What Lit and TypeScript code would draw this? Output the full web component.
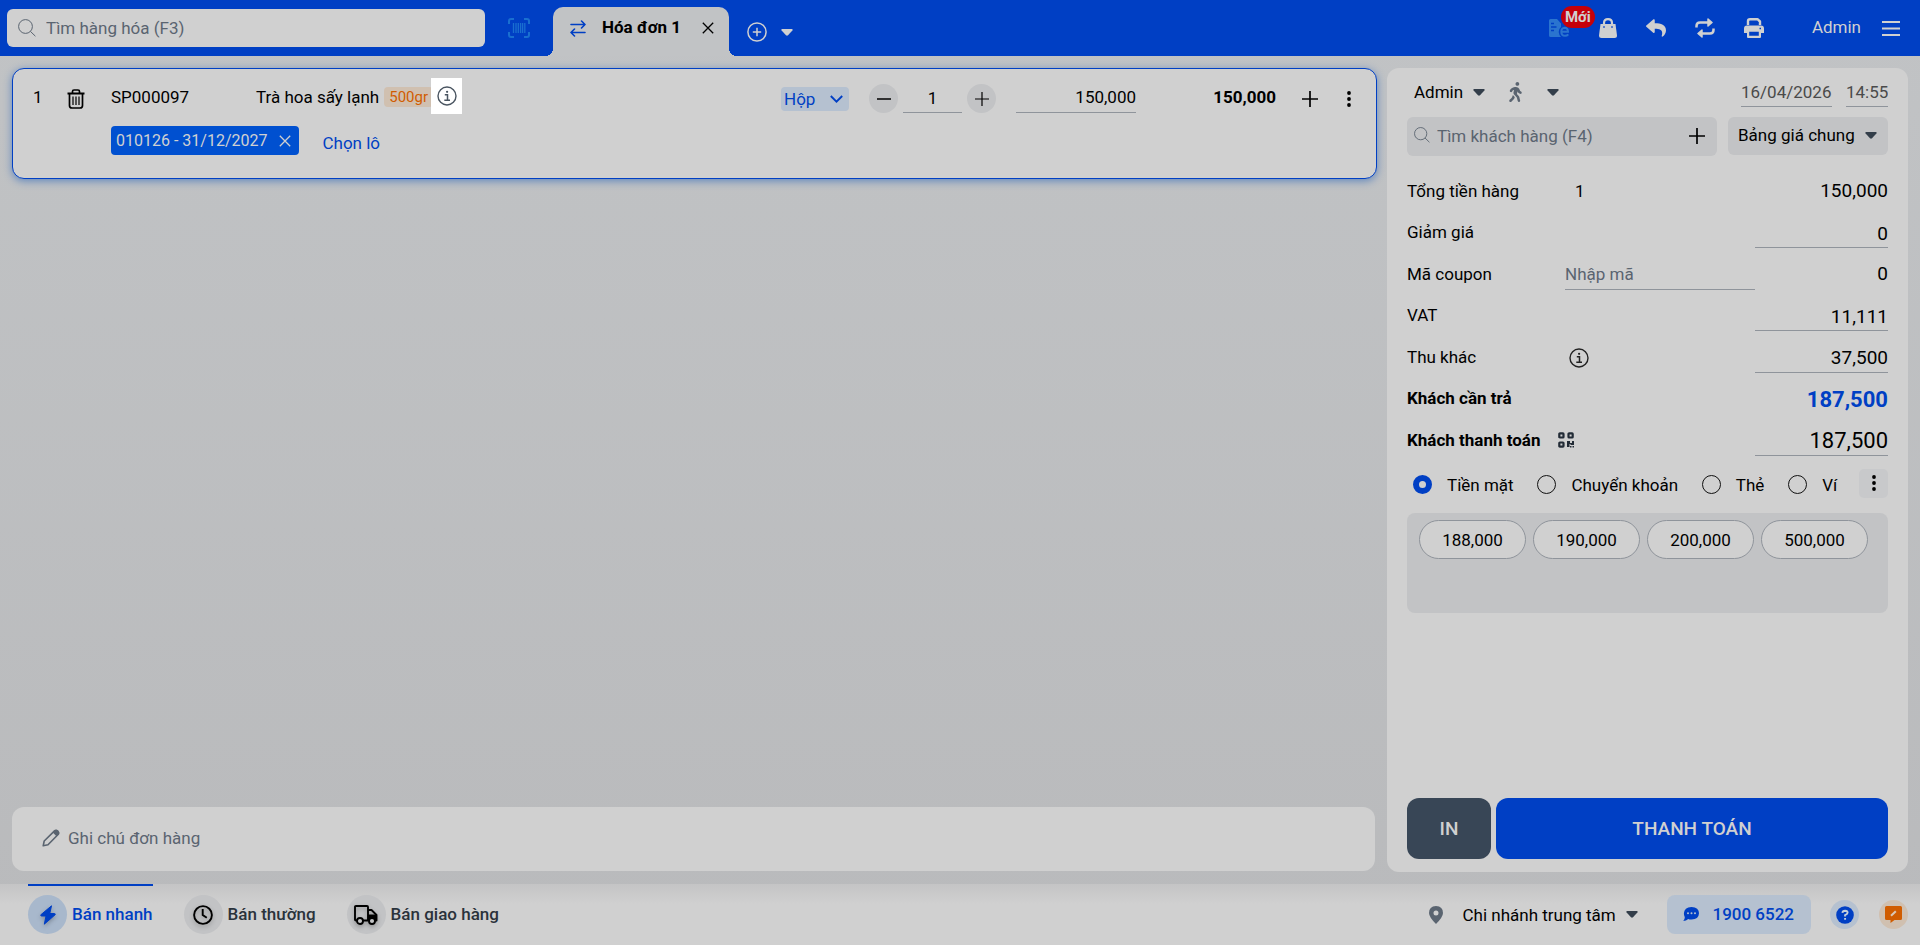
import { LitElement, html, css, svg } from "lit";
import { customElement, state } from "lit/decorators.js";

const icon = (w: number, h: number, body: unknown, viewBox = `0 0 ${w} ${h}`) =>
  html`<svg width=${w} height=${h} viewBox=${viewBox} fill="none" stroke="currentColor" aria-hidden="true">${body}</svg>`;

const icons = {
  search: () => icon(18, 18, svg`<circle cx="7.5" cy="7.5" r="6.9"/><path d="M12.4 12.4L17.4 17.2"/>`),
  searchSmall: () => icon(16, 16, svg`<circle cx="7.5" cy="7.5" r="6.9"/><path d="M12.4 12.4L17.4 17.2"/>`, "0 0 18 18"),
  barcode: () => icon(22, 20, svg`<path stroke-width="2" d="M1 6V3Q1 1 3 1H6M16 1H19Q21 1 21 3V6M21 14V17Q21 19 19 19H16M6 19H3Q1 19 1 17V14"/><path stroke-width="1.3" d="M5.5 5V15M8 5V15M10.3 5V15M12.6 5V15M14.6 5V15M16.8 5V15"/>`),
  swap: () => icon(16, 17, svg`<path stroke-width="1.6" stroke-linecap="round" stroke-linejoin="round" d="M1 4.5H15M11.5 1L15 4.5L11.5 8M15 12.5H1M4.5 9L1 12.5L4.5 16"/>`),
  close: () => icon(12, 12, svg`<path stroke-width="1.3" d="M.8 .8L11.2 11.2M11.2 .8L.8 11.2"/>`),
  plusCircle: () => icon(20, 20, svg`<circle cx="10" cy="10" r="9.1" stroke-width="1.5"/><path stroke-width="1.5" d="M10 5.8V14.2M5.8 10H14.2"/>`),
  caret: () => icon(12, 7, svg`<path fill="currentColor" stroke="none" d="M1.2 0H10.8Q12.2 .3 11.4 1.4L7 6.3Q6 7.2 5 6.3L.6 1.4Q-.2 .3 1.2 0Z"/>`),
  invoice: () => icon(21, 18, svg`<path fill="currentColor" stroke="none" d="M1.5 0H8L12 4.5V8Q9.500 10 9.700 13Q10 16 12 18H1.500Q0 18 0 16.500V1.500Q0 0 1.500 0Z"/><path stroke="#003fc4" stroke-width="1.500" d="M2 4.500H5M2 8H7.500M2 11.500H5"/><path stroke-width="2" d="M12.500 12.700H19Q18.800 8.700 15.700 8.700Q12.300 8.900 12.300 12.700Q12.300 16.800 16 16.800Q18 16.800 19.300 15.300"/>`),
  bag: () => icon(18, 20, svg`<path stroke-width="2.200" d="M5 8V5Q5 1.200 9 1.200Q13 1.200 13 5V8"/><path fill="currentColor" stroke="none" d="M1.500 6H16.500L18 17.500Q18 20 15.500 20H2.500Q0 20 0 17.500Z"/><path stroke="#003fc4" stroke-width="1.500" d="M5 8.200V9.800M13 8.200V9.800"/>`),
  reply: () => icon(20, 20, svg`<path fill="currentColor" stroke="none" d="M8.309 189.836L184.313 37.851C199.719 24.546 224 35.347 224 56.015v80.053c160.629 1.839 288 34.032 288 186.258 0 61.441-39.581 122.309-83.333 154.132-13.653 9.931-33.111-2.533-28.077-18.631 45.344-145.012-21.507-183.510-176.590-185.742V360c0 20.700-24.300 31.453-39.687 18.164l-176.004-152c-11.071-9.562-11.086-26.753 0-36.328z"/>`, "0 0 512 512"),
  sync: () => icon(20, 20, svg`<path stroke-width="2.500" d="M1.500 9.500V8Q1.500 4.500 5 4.500H14M18.500 10.500V12Q18.500 15.500 15 15.500H6"/><path fill="currentColor" stroke-width="1.500" stroke-linejoin="round" d="M13 1L17 4.500L13 8ZM7 12L3 15.500L7 19Z"/>`),
  print: () => icon(20, 20, svg`<path stroke-width="2.400" stroke-linejoin="round" d="M4 7V3Q4 1.200 6 1.200H13.500L16 3.500V7"/><path fill="currentColor" stroke="none" d="M3 7.500H17Q20 7.500 20 10.500V15H17V19Q17 20 16 20H4Q3 20 3 19V15H0V10.500Q0 7.500 3 7.500Z"/><path fill="#003fc4" stroke="none" d="M5.200 13.700H14.800V17.700H5.200ZM15.500 9.800H17V11.300H15.500Z"/>`),
  menu: () => icon(18, 15, svg`<path stroke-width="2" d="M0 1H18M0 7.500H18M0 14H18"/>`),
  trash: () => icon(18, 20, svg`<path stroke-width="2" d="M0.500 4.500H17.500"/><path stroke-width="1.700" d="M5.500 4V2.500Q5.500 1 7 1H11Q12.500 1 12.500 2.500V4M2.500 4.500V16.500Q2.500 19 5 19H13Q15.500 19 15.500 16.500V4.500"/><path stroke-width="1.200" d="M6 7.500V16M9 7.500V16M12 7.500V16"/>`),
  info: () => icon(20, 20, svg`<circle cx="10" cy="10" r="9" stroke-width="1.400"/><path stroke-width="1.500" d="M7.800 8.800H10.500V14M7.300 14.200H13"/><circle cx="10.100" cy="5.800" r="1.100" fill="currentColor" stroke="none"/>`),
  chevron: () => icon(13, 8, svg`<path stroke-width="1.900" d="M.8 1L6.500 6.600L12.200 1"/>`),
  minus: () => icon(14, 14, svg`<path stroke-width="1.500" d="M0 7H14"/>`),
  plus: () => icon(16, 16, svg`<path stroke-width="1.700" d="M0 8H16M8 0V16"/>`),
  plusThin: () => icon(14, 14, svg`<path stroke-width="1.200" d="M0 7H14M7 0V14"/>`),
  kebab: () => icon(4, 16, svg`<g fill="currentColor" stroke="none"><circle cx="2" cy="2" r="1.900"/><circle cx="2" cy="8" r="1.900"/><circle cx="2" cy="14" r="1.900"/></g>`),
  walk: () => icon(13, 20, svg`<path fill="currentColor" stroke="none" d="M208 96c26.500 0 48-21.500 48-48S234.500 0 208 0s-48 21.500-48 48 21.500 48 48 48zm94.500 149.100l-23.300-11.800-9.700-29.400c-14.700-44.600-55.700-75.800-102.200-75.900-36-.1-55.900 10.100-93.300 25.200-21.600 8.700-39.300 25.200-49.700 46.200L17.600 213c-7.800 15.800-1.500 35 14.200 42.900 15.600 7.900 34.600 1.500 42.500-14.300L81 228c3.500-7 9.300-12.500 16.500-15.400l26.800-10.800-15.200 60.700c-5.200 20.800.4 42.900 14.900 58.800l59.900 65.400c7.200 7.900 12.300 17.400 14.900 27.700l18.300 73.300c4.300 17.100 21.700 27.600 38.800 23.300 17.100-4.300 27.600-21.700 23.300-38.800l-22.200-89c-2.600-10.300-7.700-19.900-14.900-27.700l-45.500-49.700 17.200-68.700 5.500 16.500c5.300 16.100 16.700 29.400 31.700 37l23.300 11.800c15.600 7.900 34.600 1.500 42.500-14.300 7.700-15.700 1.400-35.100-14.300-43zM73.600 385.800c-3.200 8.100-8 15.400-14.200 21.500l-50 50.100c-12.500 12.500-12.500 32.800 0 45.300s32.700 12.500 45.200 0l59.400-59.400c6.100-6.100 10.900-13.400 14.200-21.500l13.500-33.800c-55.300-60.300-38.700-41.800-47.400-53.700l-20.700 51.500z"/>`, "0 0 320 512"),
  qr: () => icon(16, 16, svg`<g stroke-width="2.200"><rect x="1.300" y="1.300" width="4.200" height="4.200" rx=".6"/><rect x="10.500" y="1.300" width="4.200" height="4.200" rx=".6"/><rect x="1.300" y="10.500" width="4.200" height="4.200" rx=".6"/></g><path fill="currentColor" stroke="none" d="M9 9H12V11H14V9H16V13H12.500V12H11.500V15H9ZM12 14H13.500V15.500H12ZM14.500 14H16V15.500H14.500Z"/>`),
  pencil: () => icon(18, 18, svg`<path stroke-width="1.600" stroke-linejoin="round" d="M1.200 16.800L2.200 12L12.500 1.900Q14 .5 15.800 2.200Q17.500 4 16.100 5.500L6 15.800Z"/><path fill="currentColor" stroke="none" d="M10.800 3.500L12.500 1.500Q14.200 .1 16.200 1.800Q18 3.800 16.500 5.500L14.500 7.200Z"/>`),
  bolt: () => icon(16, 20, svg`<path fill="currentColor" stroke-linejoin="round" d="M11.500 .8L.8 9.800Q.4 10.800 1.500 11H6L4.300 19.200L15.200 9.700Q15.600 8.700 14.500 8.500H9.800Z"/>`),
  clock: () => icon(20, 20, svg`<circle cx="10" cy="10" r="8.900" stroke-width="1.900"/><path stroke-width="1.900" d="M9.700 4V10L13.800 12.800"/>`),
  truck: () => icon(24, 20, svg`<path stroke-width="1.900" stroke-linejoin="round" d="M3 15.500H1.800Q1 15.500 1 14.500V2Q1 1 2 1H13Q14 1 14 2V15.500H9M14 5H17.500L22.500 10V15.500H21"/><path fill="currentColor" stroke="none" d="M14 9.500H22.500V15.500H14Z"/><g fill="#c3c4c6" stroke-width="1.900"><circle cx="6" cy="16" r="3"/><circle cx="18" cy="16" r="3"/></g>`),
  pin: () => icon(14, 18, svg`<path fill="currentColor" fill-rule="evenodd" stroke="none" d="M7 0Q14 .3 14 7Q14 11 7 18Q0 11 0 7Q0 .3 7 0ZM7 4.500A2.500 2.500 0 1 0 7 9.500A2.500 2.500 0 1 0 7 4.500Z"/>`),
  chat: () => icon(16, 14, svg`<path fill="currentColor" stroke="none" d="M8.500 0Q16 .3 16 6.300Q15.700 12.500 8.500 12.600Q6.500 12.600 5.200 12Q3.200 13.900 .3 14Q1.900 12 1.800 10.300Q.8 8.500 .9 6.300Q1.200 .3 8.500 0Z"/><g fill="#b5c1d0" stroke="none"><circle cx="5" cy="6.300" r="1"/><circle cx="8.500" cy="6.300" r="1"/><circle cx="12" cy="6.300" r="1"/></g>`),
  help: () => icon(18, 18, svg`<circle cx="9" cy="9" r="8.800" fill="currentColor" stroke="none"/><path stroke="#c6d0dc" stroke-width="1.900" d="M6.400 6.900Q6.600 4.700 9.100 4.700Q11.600 4.800 11.600 6.800Q11.500 8.200 9.100 9.200V10.600M9.100 11.900V13.700"/>`),
  feedback: () => icon(17, 17, svg`<path fill="currentColor" stroke="none" d="M1.500 0H15.500Q17 0 17 1.500V12.500Q17 14 15.500 14H9.500L5.500 17V14H1.500Q0 14 0 12.500V1.500Q0 0 1.500 0Z"/><path stroke="#d9c9b8" stroke-width="2" d="M6 9.800L10.800 5.200"/>`),
};

@customElement("app-root")
export class AppRoot extends LitElement {
  @state() private method = "Tiền mặt";

  private methods = ["Tiền mặt", "Chuyển khoản", "Thẻ", "Ví"];
  private amounts = ["188,000", "190,000", "200,000", "500,000"];

  static styles = css`
    :host {
      --blue: #003fc4;
      --surface: #d0d0d0;
      --soft: #c2c3c5;
      --line: #8f949b;
      --muted: #5a6470;
      display: flex;
      flex-direction: column;
      min-height: 100vh;
      font: 17px/26px Roboto, sans-serif;
      color: #000;
      background: linear-gradient(#c1c3c5, #b9babc);
    }
    * { box-sizing: border-box; }
    svg { display: block; flex: none; }
    button, input, select {
      font: inherit;
      color: inherit;
      background: none;
      border: 0;
      border-radius: 0;
      padding: 0;
      margin: 0;
      outline: 0;
      min-width: 0;
    }
    button { display: flex; align-items: center; justify-content: center; cursor: pointer; }
    select { appearance: none; cursor: pointer; }
    input::placeholder { color: var(--muted); opacity: 1; }
    a { color: var(--blue); text-decoration: none; }

    .header { display: flex; height: 56px; background: var(--blue); color: var(--surface); }
    .find {
      display: flex; align-items: center; gap: 10px;
      width: 478px; height: 38px; margin: 9px 0 0 7px; padding: 0 11px;
      border-radius: 6px; background: var(--surface); color: var(--muted);
    }
    .find input { flex: 1; }
    .scan { width: 22px; margin: 0 23px; color: #1a6fd0; }
    .tab {
      position: relative; display: flex; align-items: center;
      width: 176px; height: 49px; margin-top: 7px; padding: 0 15px 17px 17px;
      border-radius: 10px 10px 0 0; background: #c1c3c5; color: #000; font-weight: 700;
    }
    .tab::before, .tab::after { content: ""; position: absolute; bottom: 0; width: 8px; height: 8px; }
    .tab::before { right: 100%; background: radial-gradient(circle at 0 0, transparent 8px, #c1c3c5 8px); }
    .tab::after { left: 100%; background: radial-gradient(circle at 100% 0, transparent 8px, #c1c3c5 8px); }
    .tab svg { margin-top: 10px; }
    .tab > svg { color: var(--blue); }
    .tab span { flex: 1; padding: 7px 0 0 16px; }
    .tab-tools { display: flex; align-items: center; gap: 14px; margin: 8px auto 0 18px; }
    .head-tools { display: flex; align-items: center; gap: 29px; }
    .head-tools .news { position: relative; color: #2a74cf; }
    .badge {
      position: absolute; left: 12px; top: -13px; padding: 0 4px;
      border-radius: 11px; background: #c50009; color: var(--surface);
      font-size: 15px; line-height: 22px; font-weight: 700;
    }
    .user { margin: 0 21px 0 48px; line-height: 54px; }
    .burger { margin-right: 20px; }

    .main { flex: 1; display: grid; grid-template-columns: minmax(0, 1fr) 521px; gap: 10px; padding: 12px; }
    .cart { display: flex; flex-direction: column; justify-content: space-between; }
    .item {
      padding: 15px 0 23px 20px; border: 1px solid var(--blue); border-radius: 12px;
      background: var(--surface); box-shadow: 0 2px 8px #5f86bd;
    }
    .item-row {
      display: grid; align-items: start;
      grid-template-columns: 34px 44px 145px minmax(0, 1fr) 88px 147px 120px 140px 100px;
    }
    .del { width: 18px; padding-top: 5px; }
    .name { display: flex; align-items: center; }
    .size {
      margin-left: 5px; padding: 0 5px; border-radius: 4px; background: #d0c0b0;
      color: #d05c00; font-size: 15px; line-height: 20px;
    }
    .focus {
      width: 31px; height: 36px; margin: -6px 0 -4px -2px;
      background: #fff; color: #4a5561;
    }
    .unit {
      display: flex; align-items: center; width: 68px; height: 24px; margin-top: 3px; padding: 0 6px 0 3px;
      border-radius: 4px; background: #b5c1d0; color: var(--blue);
    }
    .unit select { flex: 1; }
    .qty { display: flex; gap: 5px; }
    .round { width: 29px; height: 29px; border-radius: 50%; background: var(--soft); }
    .line { border-bottom: 1px solid var(--line); }
    .qty input { width: 59px; height: 29px; text-align: center; }
    .price { width: 120px; height: 29px; padding-bottom: 3px; text-align: right; }
    .total { font-weight: 700; text-align: right; }
    .row-tools { display: flex; gap: 9px; padding-left: 19px; }
    .row-tools button { width: 30px; height: 30px; }
    .lots { display: flex; align-items: center; gap: 23px; margin-top: 12px; padding-left: 78px; }
    .chip {
      display: flex; align-items: center; gap: 12px; height: 29px; padding: 0 8px 0 5px;
      border-radius: 4px; background: #0050d0; color: var(--surface); font-size: 16px;
    }
    .lots a { padding-top: 4px; margin-bottom: -1px; }
    .note {
      display: flex; align-items: center; gap: 8px; height: 64px; margin: 0 2px 1px 0; padding: 0 30px 2px;
      border-radius: 12px; background: var(--surface); color: var(--muted);
    }
    .note input { flex: 1; }

    .panel {
      display: flex; flex-direction: column; padding: 0 20px 13px;
      border-radius: 12px; background: var(--surface);
    }
    .meta { display: flex; align-items: center; height: 49px; padding: 0 0 1px 7px; color: #333e4a; }
    .meta select { color: #000; margin-right: 9px; }
    .meta .walk { display: flex; align-items: center; gap: 25px; margin: 0 auto 0 24px; }
    .meta .walk svg:first-child { color: #5a6470; }
    .meta input { height: 30px; color: #4a4a4a; }
    .date { width: 91px; margin-right: 14px; }
    .time { width: 42px; }
    .buyer { display: flex; gap: 11px; margin-bottom: 22px; }
    .customer {
      flex: 1; display: flex; align-items: center; gap: 7px; height: 39px; padding: 0 12px 2px 7px;
      border-radius: 6px; background: var(--soft); color: var(--muted);
    }
    .customer input { flex: 1; }
    .customer > svg { margin-bottom: 2px; }
    .customer button { color: #000; }
    .pricebook {
      display: flex; align-items: center; justify-content: space-between; width: 160px; height: 38px;
      padding: 0 11px 2px 10px; border-radius: 6px; background: var(--soft); color: #333e4a;
    }
    .pricebook select { color: #000; }
    .sums { display: grid; grid-auto-rows: 1fr; height: 290px; }
    .sum { display: grid; grid-template-columns: 158px minmax(0, 1fr) 133px; align-items: start; }
    .sum > :last-child { text-align: right; font-size: 19px; width: 133px; }
    .sum .count { padding-left: 10px; }
    .sum .count-info { padding: 4px 0 0 4px; color: #222; }
    .sum .coupon { height: 29px; padding-bottom: 1px; }
    .sum .amount { height: 29px; }
    .sum.due { font-weight: 700; }
    .sum > .big { font-size: 22px; }
    .sum .due-total { color: var(--blue); line-height: 30px; }
    .sum .pay-label { display: flex; align-items: center; gap: 18px; white-space: nowrap; font-weight: 700; }
    .pay-label svg { color: #222b36; }
    .methods { display: flex; align-items: center; justify-content: space-between; height: 30px; margin-bottom: 15px; padding-left: 6px; }
    .methods label { display: flex; align-items: center; gap: 15px; }
    .methods span { padding-top: 3px; }
    .methods input { appearance: none; width: 19px; height: 19px; margin-top: 2px; border: 1px solid #111; border-radius: 50%; }
    .methods input:checked { border: 6px solid var(--blue); }
    .methods button { width: 29px; height: 29px; margin-left: -2px; border-radius: 5px; background: #c8c9cb; }
    .amounts {
      display: flex; align-items: flex-start; gap: 7px; height: 100px; padding: 7px 12px;
      border-radius: 8px; background: var(--soft);
    }
    .amounts button { width: 107px; height: 39px; border: 1px solid var(--line); border-radius: 20px; background: var(--surface); }
    .actions { display: flex; gap: 5px; margin-top: auto; }
    .actions button { height: 61px; border-radius: 12px; color: var(--surface); font-size: 19px; font-weight: 500; }
    .print { width: 84px; background: #384656; }
    .pay { flex: 1; background: var(--blue); }

    .footer {
      display: flex; align-items: center; height: 61px; padding: 0 12px 0 28px;
      background: linear-gradient(#c4c4c5, var(--surface) 20px);
    }
    .modes { display: flex; gap: 31px; margin-right: auto; height: 100%; }
    .mode {
      display: flex; align-items: center; gap: 5px; padding-bottom: 2px; color: #2a323b; font-weight: 500;
      border-top: 2px solid transparent;
    }
    .mode.on { color: var(--blue); border-color: var(--blue); }
    .mode span { padding-bottom: 2px; }
    .mode i { display: grid; place-items: center; width: 39px; height: 39px; border-radius: 50%; background: var(--soft); color: #000; }
    .mode i svg { filter: drop-shadow(0 2px 2px rgba(0, 0, 0, 0.25)); }
    .mode.on i { background: #a8b8cc; color: var(--blue); }
    .branch { display: flex; align-items: center; color: #333e4a; margin-right: 29px; }
    .branch > svg:first-child { color: #5a6470; margin-right: 19px; }
    .branch select { color: #000; margin-right: 10px; }
    .phone {
      display: flex; align-items: center; gap: 13px; height: 39px; padding: 0 17px 2px 16px; margin-right: 19px;
      border-radius: 8px; background: #b5c1d0; font-weight: 500;
    }
    .dot { width: 29px; height: 29px; border-radius: 50%; background: #b5c1d0; color: var(--blue); }
    .dot.orange { margin-left: 20px; background: #d0c0b0; color: #d05c00; }
  `;

  private field(label: string, value: string, id: string, middle: unknown = html`<span></span>`) {
    return html`<div class="sum">
      <label for=${id}>${label}</label>${middle}
      <input class="amount line" id=${id} .value=${value} />
    </div>`;
  }

  render() {
    return html`
      <header class="header">
        <label class="find">${icons.search()}<input placeholder="Tìm hàng hóa (F3)" aria-label="Tìm hàng hóa" /></label>
        <button class="scan" aria-label="Quét mã vạch">${icons.barcode()}</button>
        <div class="tab">${icons.swap()}<span>Hóa đơn 1</span><button aria-label="Đóng">${icons.close()}</button></div>
        <div class="tab-tools">
          <button aria-label="Thêm hóa đơn">${icons.plusCircle()}</button>
          <button aria-label="Danh sách">${icons.caret()}</button>
        </div>
        <div class="head-tools">
          <button class="news" aria-label="Hóa đơn điện tử">${icons.invoice()}<span class="badge">Mới</span></button>
          <button aria-label="Đặt hàng">${icons.bag()}</button>
          <button aria-label="Trả hàng">${icons.reply()}</button>
          <button aria-label="Đồng bộ">${icons.sync()}</button>
          <button aria-label="In">${icons.print()}</button>
        </div>
        <span class="user">Admin</span>
        <button class="burger" aria-label="Menu">${icons.menu()}</button>
      </header>

      <main class="main">
        <section class="cart">
          <article class="item">
            <div class="item-row">
              <span>1</span>
              <button class="del" aria-label="Xóa">${icons.trash()}</button>
              <span>SP000097</span>
              <div class="name">
                <span>Trà hoa sấy lạnh</span><span class="size">500gr</span>
                <button class="focus" aria-label="Thông tin">${icons.info()}</button>
              </div>
              <div class="unit"><select aria-label="Đơn vị"><option>Hộp</option></select>${icons.chevron()}</div>
              <div class="qty">
                <button class="round" aria-label="Giảm">${icons.minus()}</button>
                <input class="line" aria-label="Số lượng" value="1" />
                <button class="round" aria-label="Tăng">${icons.plusThin()}</button>
              </div>
              <input class="price line" aria-label="Đơn giá" value="150,000" />
              <span class="total">150,000</span>
              <div class="row-tools">
                <button aria-label="Thêm dòng">${icons.plus()}</button>
                <button aria-label="Tùy chọn">${icons.kebab()}</button>
              </div>
            </div>
            <div class="lots">
              <span class="chip">010126 - 31/12/2027 <button aria-label="Bỏ lô">${icons.close()}</button></span>
              <a href="#">Chọn lô</a>
            </div>
          </article>
          <label class="note">${icons.pencil()}<input placeholder="Ghi chú đơn hàng" aria-label="Ghi chú đơn hàng" /></label>
        </section>

        <aside class="panel">
          <div class="meta">
            <select aria-label="Nhân viên"><option>Admin</option></select>${icons.caret()}
            <button class="walk" aria-label="Kênh bán">${icons.walk()}${icons.caret()}</button>
            <input class="date line" aria-label="Ngày" value="16/04/2026" />
            <input class="time line" aria-label="Giờ" value="14:55" />
          </div>
          <div class="buyer">
            <div class="customer">
              ${icons.searchSmall()}<input placeholder="Tìm khách hàng (F4)" aria-label="Tìm khách hàng" />
              <button aria-label="Thêm khách hàng">${icons.plus()}</button>
            </div>
            <div class="pricebook"><select aria-label="Bảng giá"><option>Bảng giá chung</option></select>${icons.caret()}</div>
          </div>
          <div class="sums">
            <div class="sum"><span>Tổng tiền hàng</span><span class="count">1</span><span>150,000</span></div>
            ${this.field("Giảm giá", "0", "discount")}
            <div class="sum">
              <label for="coupon">Mã coupon</label>
              <input class="coupon line" id="coupon" placeholder="Nhập mã" />
              <span>0</span>
            </div>
            ${this.field("VAT", "11,111", "vat")}
            ${this.field("Thu khác", "37,500", "other", html`<span class="count-info">${icons.info()}</span>`)}
            <div class="sum due"><span>Khách cần trả</span><span></span><span class="big due-total">187,500</span></div>
            <div class="sum">
              <label class="pay-label" for="paid">Khách thanh toán ${icons.qr()}</label><span></span>
              <input class="amount line big" id="paid" value="187,500" />
            </div>
          </div>
          <div class="methods">
            ${this.methods.map(
              (m) => html`<label>
                <input type="radio" name="method" .checked=${m === this.method} @change=${() => (this.method = m)} />
                <span>${m}</span>
              </label>`
            )}
            <button aria-label="Khác">${icons.kebab()}</button>
          </div>
          <div class="amounts">${this.amounts.map((a) => html`<button>${a}</button>`)}</div>
          <div class="actions"><button class="print">IN</button><button class="pay">THANH TOÁN</button></div>
        </aside>
      </main>

      <footer class="footer">
        <nav class="modes">
          <a class="mode on" href="#"><i>${icons.bolt()}</i><span>Bán nhanh</span></a>
          <a class="mode" href="#"><i>${icons.clock()}</i><span>Bán thường</span></a>
          <a class="mode" href="#"><i>${icons.truck()}</i><span>Bán giao hàng</span></a>
        </nav>
        <div class="branch">${icons.pin()}<select aria-label="Chi nhánh"><option>Chi nhánh trung tâm</option></select>${icons.caret()}</div>
        <a class="phone" href="tel:19006522">${icons.chat()}1900 6522</a>
        <button class="dot" aria-label="Trợ giúp">${icons.help()}</button>
        <button class="dot orange" aria-label="Góp ý">${icons.feedback()}</button>
      </footer>
    `;
  }
}
